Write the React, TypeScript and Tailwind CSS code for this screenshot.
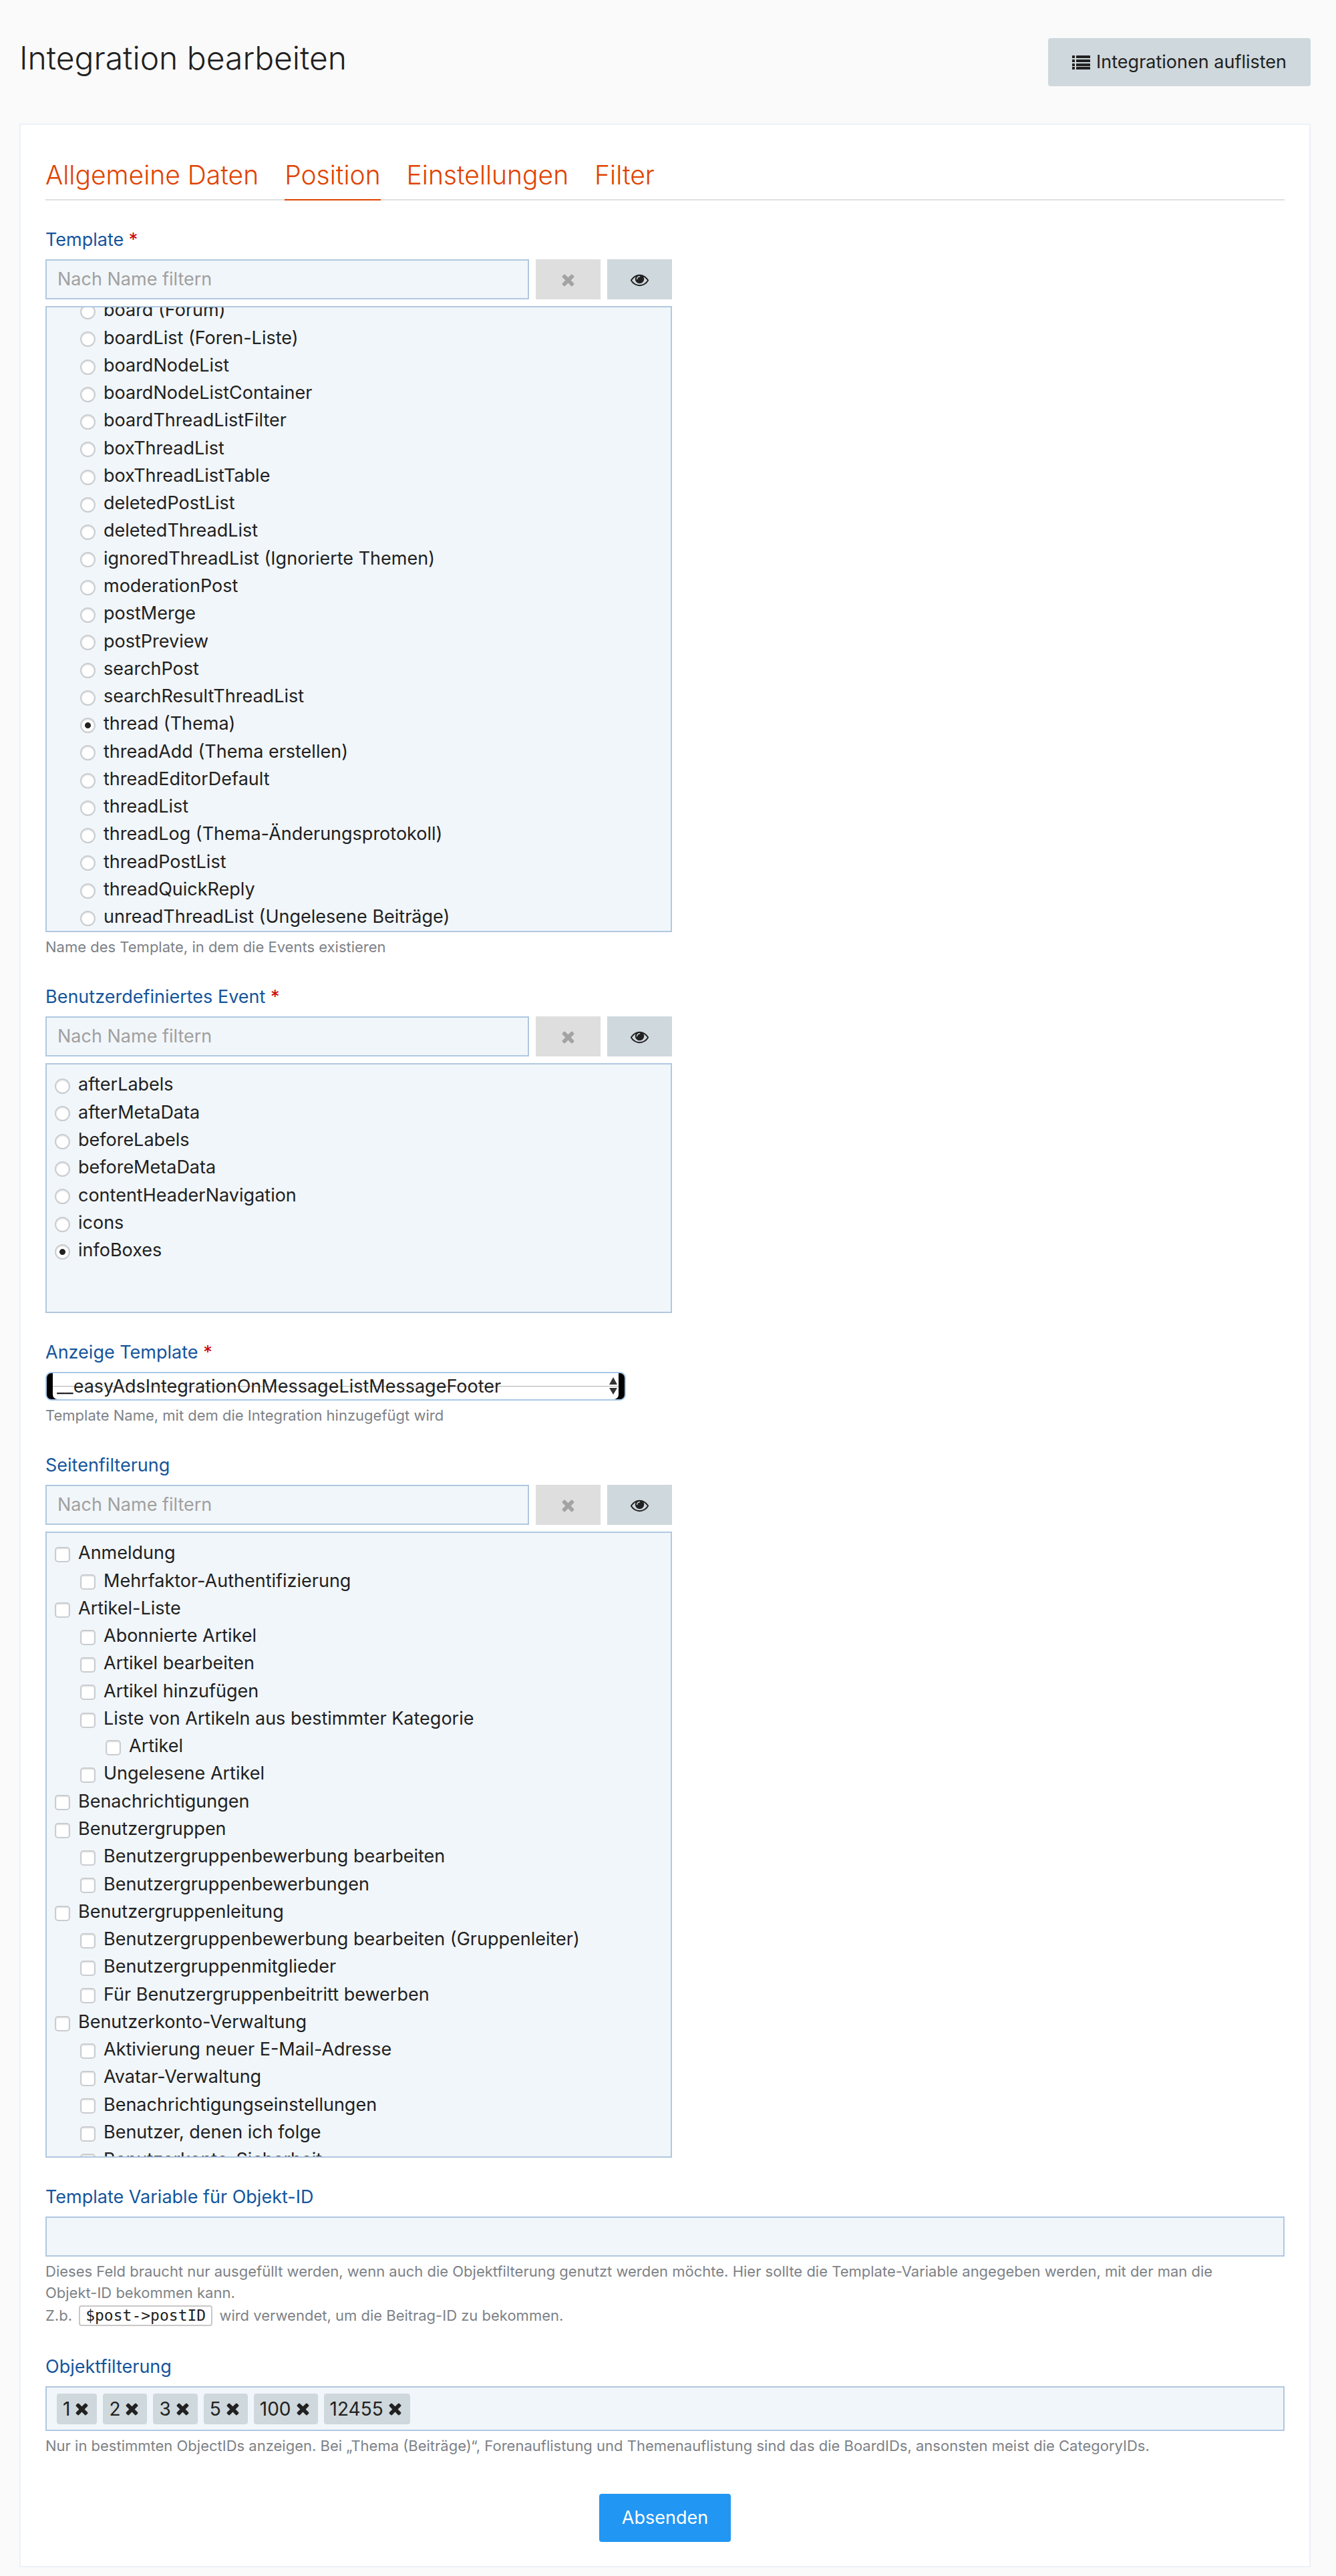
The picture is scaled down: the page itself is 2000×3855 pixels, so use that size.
import { useState } from 'react'
import type { ReactNode } from 'react'

interface Eintrag {
  name: string
  ebene?: number
}

const templates: Eintrag[] = [
  { name: 'board (Forum)', ebene: 1 },
  { name: 'boardList (Foren-Liste)', ebene: 1 },
  { name: 'boardNodeList', ebene: 1 },
  { name: 'boardNodeListContainer', ebene: 1 },
  { name: 'boardThreadListFilter', ebene: 1 },
  { name: 'boxThreadList', ebene: 1 },
  { name: 'boxThreadListTable', ebene: 1 },
  { name: 'deletedPostList', ebene: 1 },
  { name: 'deletedThreadList', ebene: 1 },
  { name: 'ignoredThreadList (Ignorierte Themen)', ebene: 1 },
  { name: 'moderationPost', ebene: 1 },
  { name: 'postMerge', ebene: 1 },
  { name: 'postPreview', ebene: 1 },
  { name: 'searchPost', ebene: 1 },
  { name: 'searchResultThreadList', ebene: 1 },
  { name: 'thread (Thema)', ebene: 1 },
  { name: 'threadAdd (Thema erstellen)', ebene: 1 },
  { name: 'threadEditorDefault', ebene: 1 },
  { name: 'threadList', ebene: 1 },
  { name: 'threadLog (Thema-Änderungsprotokoll)', ebene: 1 },
  { name: 'threadPostList', ebene: 1 },
  { name: 'threadQuickReply', ebene: 1 },
  { name: 'unreadThreadList (Ungelesene Beiträge)', ebene: 1 },
]

const events: Eintrag[] = [
  { name: 'afterLabels' },
  { name: 'afterMetaData' },
  { name: 'beforeLabels' },
  { name: 'beforeMetaData' },
  { name: 'contentHeaderNavigation' },
  { name: 'icons' },
  { name: 'infoBoxes' },
]

const seiten: Eintrag[] = [
  { name: 'Anmeldung' },
  { name: 'Mehrfaktor-Authentifizierung', ebene: 1 },
  { name: 'Artikel-Liste' },
  { name: 'Abonnierte Artikel', ebene: 1 },
  { name: 'Artikel bearbeiten', ebene: 1 },
  { name: 'Artikel hinzufügen', ebene: 1 },
  { name: 'Liste von Artikeln aus bestimmter Kategorie', ebene: 1 },
  { name: 'Artikel', ebene: 2 },
  { name: 'Ungelesene Artikel', ebene: 1 },
  { name: 'Benachrichtigungen' },
  { name: 'Benutzergruppen' },
  { name: 'Benutzergruppenbewerbung bearbeiten', ebene: 1 },
  { name: 'Benutzergruppenbewerbungen', ebene: 1 },
  { name: 'Benutzergruppenleitung' },
  { name: 'Benutzergruppenbewerbung bearbeiten (Gruppenleiter)', ebene: 1 },
  { name: 'Benutzergruppenmitglieder', ebene: 1 },
  { name: 'Für Benutzergruppenbeitritt bewerben', ebene: 1 },
  { name: 'Benutzerkonto-Verwaltung' },
  { name: 'Aktivierung neuer E-Mail-Adresse', ebene: 1 },
  { name: 'Avatar-Verwaltung', ebene: 1 },
  { name: 'Benachrichtigungseinstellungen', ebene: 1 },
  { name: 'Benutzer, denen ich folge', ebene: 1 },
  { name: 'Benutzerkonto-Sicherheit', ebene: 1 },
]

const tabs = ['Allgemeine Daten', 'Position', 'Einstellungen', 'Filter']
const einzug = ['pl-3', 'pl-[50px]', 'pl-[88px]']

function TimesIcon() {
  return (
    <svg viewBox="0 0 1792 1792" className="size-[27px]" fill="currentColor" aria-hidden="true">
      <path d="M1490 1322q0 40-28 68l-136 136q-28 28-68 28t-68-28l-294-294-294 294q-28 28-68 28t-68-28l-136-136q-28-28-28-68t28-68l294-294-294-294q-28-28-28-68t28-68l136-136q28-28 68-28t68 28l294 294 294-294q28-28 68-28t68 28l136 136q28 28 28 68t-28 68l-294 294 294 294q28 28 28 68z" />
    </svg>
  )
}

function EyeIcon() {
  return (
    <svg viewBox="0 0 1792 1792" className="size-[27px]" fill="currentColor" aria-hidden="true">
      <path d="M1664 960q-152-236-381-353 61 104 61 225 0 185-131.5 316.5t-316.5 131.5-316.5-131.5-131.5-316.5q0-121 61-225-229 117-381 353 133 205 333.5 326.5t434.5 121.5 434.5-121.5 333.5-326.5zm-720-384q0-20-14-34t-34-14q-125 0-214.5 89.5t-89.5 214.5q0 20 14 34t34 14 34-14 14-34q0-86 61-147t147-61q20 0 34-14t14-34zm848 384q0 34-20 69-140 230-376.5 368.5t-499.5 138.5-499.5-139-376.5-368q-20-35-20-69t20-69q140-229 376.5-368t499.5-139 499.5 139 376.5 368q20 35 20 69z" />
    </svg>
  )
}

function ListIcon() {
  return (
    <svg viewBox="0 0 27 21" className="h-[21px] w-[27px]" fill="currentColor" aria-hidden="true">
      {[0, 6, 12, 17].map((y) => (
        <g key={y}>
          <rect x="0" y={y} width="4" height="4" rx="0.5" />
          <rect x="6" y={y} width="21" height="4" rx="0.5" />
        </g>
      ))}
    </svg>
  )
}

interface FeldProps {
  id: string
  titel: string
  pflicht?: boolean
  hilfe?: ReactNode
  children: ReactNode
}

function Feld({ id, titel, pflicht, hilfe, children }: FeldProps) {
  return (
    <div className="mt-[38px]">
      <label htmlFor={id} className="mb-[9px] block leading-[41px] text-[#15559c]">
        {titel}
        {pflicht && <span className="text-[#cc0001]"> *</span>}
      </label>
      {children}
      {hilfe && <div className="mt-1.5 text-[22px] leading-8 text-[#7d8287]">{hilfe}</div>}
    </div>
  )
}

function NamensFilter({ id }: { id: string }) {
  const [wert, setWert] = useState('')

  return (
    <div className="mb-2.5 flex h-[60px] gap-2.5">
      <input
        id={id}
        type="text"
        placeholder="Nach Name filtern"
        value={wert}
        onChange={(e) => setWert(e.target.value)}
        className="min-w-0 flex-1 border-2 border-[#b0c8e0] bg-[#f1f6fa] px-4 text-[#212121] outline-none placeholder:text-[#a0a0a0]"
      />
      <button
        type="button"
        aria-label="Filter leeren"
        disabled={!wert}
        onClick={() => setWert('')}
        className="flex w-[97px] items-center justify-center bg-[#dedede] text-[#a3a3a3]"
      >
        <TimesIcon />
      </button>
      <button
        type="button"
        aria-label="Sichtbarkeit"
        className="flex w-[97px] items-center justify-center bg-[#cfd8dc] text-[#212121]"
      >
        <EyeIcon />
      </button>
    </div>
  )
}

interface ListeProps {
  typ: 'radio' | 'checkbox'
  gruppe: string
  eintraege: Eintrag[]
  aktiv?: string
}

function Liste({ typ, gruppe, eintraege, aktiv }: ListeProps) {
  const form =
    typ === 'radio'
      ? 'rounded-full checked:bg-[radial-gradient(circle,#212121_0_4px,#fff_5px)]'
      : 'rounded-[5px] checked:bg-[#15559c]'

  return (
    <>
      {eintraege.map((e) => (
        <li key={e.name} className={`flex items-center ${einzug[e.ebene ?? 0]}`}>
          <label className="flex items-center gap-3 whitespace-nowrap">
            <input
              type={typ}
              name={gruppe}
              defaultChecked={e.name === aktiv}
              className={`mt-1 size-[23px] shrink-0 appearance-none border-2 border-[#cacdd0] bg-white shadow-[inset_0_1px_2px_#ddd] ${form}`}
            />
            {e.name}
          </label>
        </li>
      ))}
    </>
  )
}

export default function App() {
  const [tab, setTab] = useState('Position')
  const [objekte, setObjekte] = useState(['1', '2', '3', '5', '100', '12455'])

  return (
    <div className="min-h-screen bg-[#fafafa] pr-[38px] pb-3.5 pl-[29px] font-['Inter',sans-serif] text-[27px] text-[#212121]">
      <header className="flex items-start justify-between pb-14 pt-[57px]">
        <h1 className="text-[48px] font-light leading-[60px]">Integration bearbeiten</h1>
        <a href="#liste" className="flex h-[72px] items-center gap-[9px] rounded-[4px] bg-[#cfd8dc] px-9">
          <ListIcon />
          Integrationen auflisten
        </a>
      </header>

      <main className="border-2 border-[#ebf1f8] bg-white px-[37px] pb-9 pt-[49px]">
        <nav className="flex gap-[39px] border-b-2 border-[#e0e0e0] text-[39px] font-light leading-[51px] text-[#e04300]">
          {tabs.map((t) => (
            <a
              key={t}
              href={`#${t}`}
              onClick={() => setTab(t)}
              className={`-mb-0.5 border-b-2 pb-[11px] ${t === tab ? 'border-[#e04300]' : 'border-transparent'}`}
            >
              {t}
            </a>
          ))}
        </nav>

        <form onSubmit={(e) => e.preventDefault()}>
          <Feld id="template" titel="Template" pflicht hilfe="Name des Template, in dem die Events existieren">
            <div className="max-w-[938px]">
              <NamensFilter id="template" />
              <div className="flex h-[937px] flex-col justify-end overflow-hidden border-2 border-[#b0c8e0] bg-[#f1f6fa]">
                <ul className="grid h-[949px] shrink-0 auto-rows-fr">
                  <Liste typ="radio" gruppe="template" eintraege={templates} aktiv="thread (Thema)" />
                </ul>
              </div>
            </div>
          </Feld>

          <Feld id="event" titel="Benutzerdefiniertes Event" pflicht>
            <div className="max-w-[938px]">
              <NamensFilter id="event" />
              <div className="h-[374px] overflow-hidden border-2 border-[#b0c8e0] bg-[#f1f6fa] pt-2.5">
                <ul className="grid h-[289px] auto-rows-fr">
                  <Liste typ="radio" gruppe="event" eintraege={events} aktiv="infoBoxes" />
                </ul>
              </div>
            </div>
          </Feld>

          <Feld id="anzeige" titel="Anzeige Template" pflicht hilfe="Template Name, mit dem die Integration hinzugefügt wird">
            <div className="relative h-[43px] max-w-[869px] rounded-[9px] border-2 border-[#a9c8e8] bg-black px-[9px]">
              <select
                id="anzeige"
                className="block h-full w-full appearance-none rounded-b-[7px] bg-white bg-[linear-gradient(#b0b0b0,#b0b0b0)] bg-[length:100%_1px] bg-center bg-no-repeat px-[6px] leading-[39px] outline-none"
              >
                <option>__easyAdsIntegrationOnMessageListMessageFooter</option>
              </select>
              <svg
                viewBox="0 0 14 26"
                className="pointer-events-none absolute right-[10px] top-[6px] h-[26px] w-[14px]"
                fill="#333"
                aria-hidden="true"
              >
                <path d="M7 0L13 11H1zM7 26L13 16H1z" />
              </svg>
            </div>
          </Feld>

          <Feld id="seiten" titel="Seitenfilterung">
            <div className="max-w-[938px]">
              <NamensFilter id="seiten" />
              <div className="h-[937px] overflow-hidden border-2 border-[#b0c8e0] bg-[#f1f6fa] pt-2.5">
                <ul className="grid h-[949px] auto-rows-fr">
                  <Liste typ="checkbox" gruppe="seiten" eintraege={seiten} />
                </ul>
              </div>
            </div>
          </Feld>

          <Feld
            id="variable"
            titel="Template Variable für Objekt-ID"
            hilfe={
              <>
                Dieses Feld braucht nur ausgefüllt werden, wenn auch die Objektfilterung genutzt werden möchte. Hier
                sollte die Template-Variable angegeben werden, mit der man die
                <br />
                Objekt-ID bekommen kann.
                <span className="block leading-9">
                  Z.b.{' '}
                  <code className="mx-1 inline-block rounded-[4px] border-2 border-[#c8c8c8] bg-white px-2 font-['DejaVu_Sans_Mono',monospace] text-[23px] leading-[27px] text-[#212121]">
                    $post-&gt;postID
                  </code>{' '}
                  wird verwendet, um die Beitrag-ID zu bekommen.
                </span>
              </>
            }
          >
            <input
              id="variable"
              type="text"
              className="block h-[60px] w-full border-2 border-[#b0c8e0] bg-[#f1f6fa] px-4 outline-none"
            />
          </Feld>

          <Feld
            id="objekte"
            titel="Objektfilterung"
            hilfe="Nur in bestimmten ObjectIDs anzeigen. Bei „Thema (Beiträge)“, Forenauflistung und Themenauflistung sind das die BoardIDs, ansonsten meist die CategoryIDs."
          >
            <div className="flex h-[67px] items-center gap-[9px] border-2 border-[#b0c8e0] bg-[#f1f6fa] px-[15px]">
              {objekte.map((o) => (
                <button
                  key={o}
                  type="button"
                  onClick={() => setObjekte(objekte.filter((x) => x !== o))}
                  className="flex h-[46px] items-center gap-1 rounded-[4px] bg-[#cfd8dc] px-[9px] text-[28px]"
                >
                  {o}
                  <TimesIcon />
                </button>
              ))}
              <input id="objekte" type="text" className="min-w-0 flex-1 bg-transparent outline-none" />
            </div>
          </Feld>

          <div className="mt-14 flex justify-center">
            <button type="submit" className="h-[72px] rounded-[4px] bg-[#2196f3] px-[34px] text-white">
              Absenden
            </button>
          </div>
        </form>
      </main>
    </div>
  )
}
